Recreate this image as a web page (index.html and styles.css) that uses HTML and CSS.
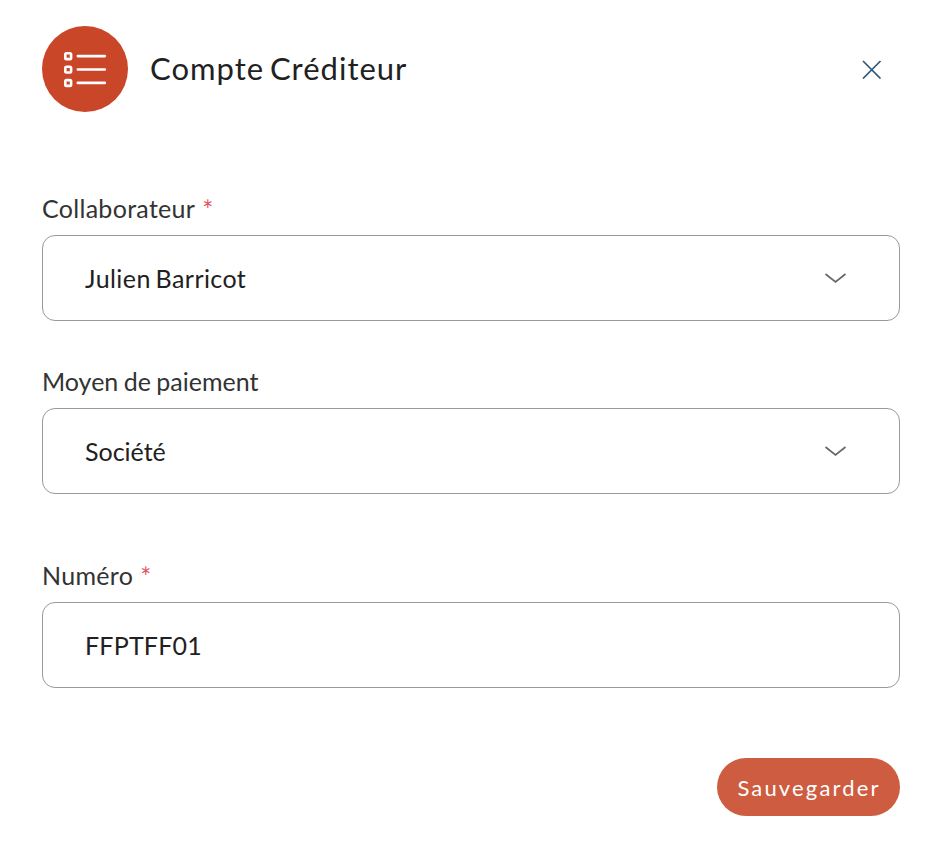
FILE: index.html
```html
<!DOCTYPE html>
<html lang="fr">
<head>
<meta charset="utf-8">
<title>Compte Créditeur</title>
<link rel="stylesheet" href="styles.css">
</head>
<body>
<form class="dialog">
  <header class="header">
    <span class="badge">
      <svg width="86" height="86" viewBox="0 0 86 86" fill="none" stroke="#fff" stroke-width="2.6" stroke-linecap="round">
        <rect x="23.3" y="27.3" width="5.8" height="5.8" rx="1.2"/>
        <rect x="23.3" y="40.7" width="5.8" height="5.8" rx="1.2"/>
        <rect x="23.3" y="54.1" width="5.8" height="5.8" rx="1.2"/>
        <path d="M35.8 30.1H62.8M35.8 43.5H62.8M35.8 56.9H62.8"/>
      </svg>
    </span>
    <h1 class="title">Compte Créditeur</h1>
    <button class="close" type="button" aria-label="Fermer">
      <svg width="20" height="20" viewBox="0 0 20 20" fill="none" stroke="#2f5878" stroke-width="1.7"><path d="M1 2l17.5 17.5M18.5 2l-17.5 17.5"/></svg>
    </button>
  </header>
  <div class="field">
    <div class="label wide">Collaborateur<span class="required">*</span></div>
    <div class="control"><span class="value name">Julien Barricot</span>
      <svg class="chevron" width="22" height="12" viewBox="0 0 22 12" fill="none" stroke="#666" stroke-width="1.7"><path d="M1.5 2l10 8 10-8"/></svg></div>
  </div>
  <div class="field">
    <div class="label method">Moyen de paiement</div>
    <div class="control"><span class="value">Société</span>
      <svg class="chevron" width="22" height="12" viewBox="0 0 22 12" fill="none" stroke="#666" stroke-width="1.7"><path d="M1.5 2l10 8 10-8"/></svg></div>
  </div>
  <div class="field number">
    <div class="label wide">Numéro<span class="required">*</span></div>
    <div class="control"><span class="value code">FFPTFF01</span></div>
  </div>
  <button class="save" type="button">Sauvegarder</button>
</form>
</body>
</html>
```
FILE: styles.css
```css
* { box-sizing: border-box; }
body { margin: 0; background: #fff; color: #212121; font-family: Lato, sans-serif; }
svg { display: block; }
button { border: 0; background: none; padding: 0; font: inherit; }
.dialog { display: flex; flex-direction: column; padding: 26px 34px 28px 42px; }
.header { display: flex; align-items: center; height: 86px; margin-bottom: 78px; }
.badge { width: 86px; height: 86px; border-radius: 50%; background: #c94728; }
.title { flex: 1; margin: 0 0 2px 22px; font-size: 31px; line-height: 40px; font-weight: 400; letter-spacing: 1px; word-spacing: -3px; }
.close { margin-right: 18px; }
.field { margin-bottom: 42px; }
.label { height: 45px; font-size: 25px; line-height: 36px; color: #333; }
.wide { letter-spacing: 0.3px; }
.method { word-spacing: -1px; }
.required { display: inline-block; margin-left: 7px; color: #e25563; font-size: 26px; line-height: 1; transform: translateY(2px); }
.control { display: flex; align-items: center; justify-content: space-between; height: 86px; padding: 0 53px 0 42px; border: 1px solid #999; border-radius: 13px; font-size: 25px; }
.name { letter-spacing: 0.43px; word-spacing: -2px; }
.code { letter-spacing: 0.2px; }
.number { margin-top: 21px; margin-bottom: 70px; }
.save { align-self: flex-end; width: 183px; height: 58px; padding-left: 1px; border-radius: 29px; background: #ce5c40; color: #fff; font-size: 22px; letter-spacing: 2.15px; }
```
